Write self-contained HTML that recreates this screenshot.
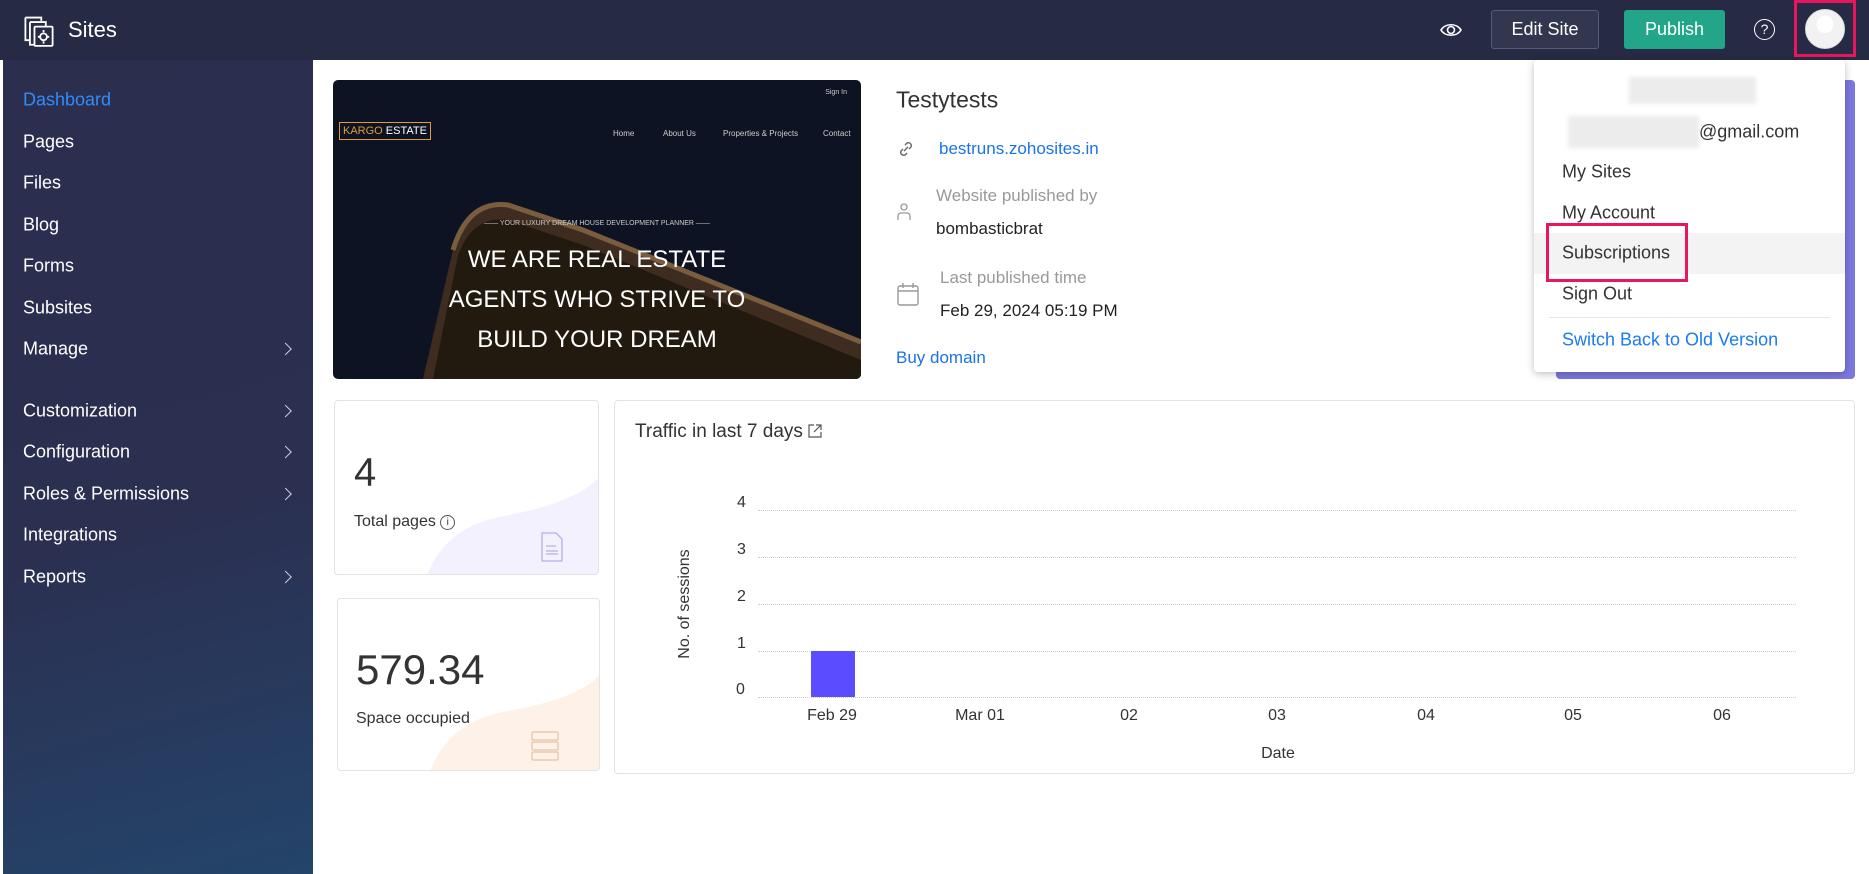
<!DOCTYPE html>
<html><head><meta charset="utf-8"><style>
*{margin:0;padding:0;box-sizing:border-box}
body{width:1869px;height:874px;overflow:hidden;background:#fff;font-family:"Liberation Sans",sans-serif;position:relative;color:#222}
.a{position:absolute;white-space:nowrap}
#hdr{left:0;top:0;width:1869px;height:60px;background:#272a45}
#side{left:3px;top:60px;width:310px;height:814px;background:linear-gradient(165deg,#2b2e4d 0%,#2b2f50 55%,#24446a 100%)}
.nav{position:absolute;left:20px;color:#fff;font-size:18px;transform:translateY(-50%)}
.chev{position:absolute;left:278px;width:9px;height:9px;border-right:1.6px solid #ccd;border-top:1.6px solid #ccd;transform:translateY(-50%) rotate(45deg)}
.mid{transform:translateY(-50%)}
.dd{font-size:18px;color:#333;left:1562px}
.yl{font-size:16px;color:#333;left:737px}
.xl{font-size:16px;color:#333;top:716px;transform:translate(-50%,-50%)}
.grid{position:absolute;left:758px;width:1038px;border-top:1.5px dotted #ccc}
.pn{position:absolute;top:49px;color:#ccc;font-size:8px}
</style></head><body>
<div id="hdr" class="a"></div>
<svg class="a" style="left:22px;top:13px" width="34" height="34" viewBox="0 0 28 30" fill="none" stroke="#fff" stroke-width="1.6"><path d="M2 4h14v3M2 4v20h4M6 8h14v4M6 8v20h4"/><rect x="10" y="12" width="16" height="17" rx="1"/><circle cx="18" cy="21" r="3"/><path d="M18 15v2M18 25v2M13 21h2M21 21h2"/></svg>
<div class="a mid" style="left:68px;top:30px;color:#fff;font-size:22px">Sites</div>
<svg class="a" style="left:1440px;top:20px" width="22" height="20" viewBox="0 0 22 20" fill="none" stroke="#fff" stroke-width="1.6"><path d="M1 10C5 3 17 3 21 10C17 17 5 17 1 10Z"/><circle cx="11" cy="10" r="3.5"/></svg>
<div class="a" style="left:1491px;top:10px;width:108px;height:39px;background:#33364f;border:1px solid #565a72;border-radius:3px;color:#fff;font-size:18px;text-align:center;line-height:37px">Edit Site</div>
<div class="a" style="left:1624px;top:10px;width:101px;height:39px;background:#23a58a;border-radius:3px;color:#fff;font-size:18px;text-align:center;line-height:39px">Publish</div>
<div class="a" style="left:1754px;top:19px;width:21px;height:21px;border:1.6px solid #fff;border-radius:50%;color:#fff;font-size:14px;text-align:center;line-height:18px">?</div>
<div class="a" style="left:1794px;top:0;width:62px;height:57px;border:3px solid #e8175d"></div>
<div class="a" style="left:1805px;top:9px;width:40px;height:40px;border-radius:50%;background:radial-gradient(circle at 50% 38%,#fff 0 28%,#f2f2f2 29% 100%);border:1px solid #ddd"></div>

<div id="side" class="a">
<div class="nav" style="top:40px;color:#2f8cff">Dashboard</div>
<div class="nav" style="top:82px">Pages</div>
<div class="nav" style="top:123px">Files</div>
<div class="nav" style="top:165px">Blog</div>
<div class="nav" style="top:206px">Forms</div>
<div class="nav" style="top:248px">Subsites</div>
<div class="nav" style="top:289px">Manage</div><div class="chev" style="top:289px"></div>
<div class="nav" style="top:351px">Customization</div><div class="chev" style="top:351px"></div>
<div class="nav" style="top:392px">Configuration</div><div class="chev" style="top:392px"></div>
<div class="nav" style="top:434px">Roles &amp; Permissions</div><div class="chev" style="top:434px"></div>
<div class="nav" style="top:475px">Integrations</div>
<div class="nav" style="top:517px">Reports</div><div class="chev" style="top:517px"></div>
</div>

<!-- preview -->
<div class="a" style="left:333px;top:80px;width:528px;height:299px;background:#0d1322;border-radius:5px;overflow:hidden">
<svg width="528" height="299" style="position:absolute;left:0;top:0"><path d="M90 299L120 170Q135 120 175 125L250 150L528 260L528 299Z" fill="#3e2c20"/><path d="M100 299L125 175Q140 135 175 140L250 165L528 280L528 299Z" fill="#22190f"/><path d="M120 170Q135 120 175 125L250 150L528 262" stroke="#7a5c3e" stroke-width="5" fill="none"/></svg>
<div class="a" style="right:14px;top:9px;color:#ccc;font-size:7px">Sign In</div>
<div class="a" style="left:6px;top:42px;border:1.5px solid #e29a3a;padding:2px 3px;font-size:11px;color:#e29a3a">KARGO <span style="color:#fff">ESTATE</span></div>
<div class="pn" style="left:280px">Home</div>
<div class="pn" style="left:330px">About Us</div>
<div class="pn" style="left:390px">Properties &amp; Projects</div>
<div class="pn" style="left:490px">Contact</div>
<div class="a" style="left:0;width:528px;top:140px;text-align:center;color:#ccc;font-size:7px">—— YOUR LUXURY DREAM HOUSE DEVELOPMENT PLANNER ——</div>
<div class="a" style="left:0;width:528px;top:160px;text-align:center;color:#fff;font-size:24px;line-height:40px">WE ARE REAL ESTATE<br>AGENTS WHO STRIVE TO<br>BUILD YOUR DREAM</div>
</div>

<div class="a mid" style="left:896px;top:100px;font-size:23px;color:#333">Testytests</div>
<svg class="a" style="left:896px;top:139px" width="20" height="20" viewBox="0 0 20 20" fill="none" stroke="#666" stroke-width="1.4"><path d="M8 12l4-4M9 6l2-2a3 3 0 014 4l-2 2M11 14l-2 2a3 3 0 01-4-4l2-2"/></svg>
<div class="a mid" style="left:939px;top:149px;font-size:17px;color:#1a73e8">bestruns.zohosites.in</div>
<svg class="a" style="left:896px;top:201px" width="16" height="20" viewBox="0 0 16 20" fill="none" stroke="#999" stroke-width="1.3"><circle cx="8" cy="6" r="3"/><path d="M2 19v-4a3 3 0 013-3h6a3 3 0 013 3v4"/></svg>
<div class="a mid" style="left:936px;top:196px;font-size:17px;color:#999">Website published by</div>
<div class="a mid" style="left:936px;top:229px;font-size:17px;color:#222">bombasticbrat</div>
<svg class="a" style="left:897px;top:282px" width="22" height="24" viewBox="0 0 22 24" fill="none" stroke="#999" stroke-width="1.4"><rect x="1" y="4" width="20" height="19" rx="2"/><path d="M1 9h20M6 1v5M16 1v5"/></svg>
<div class="a mid" style="left:940px;top:278px;font-size:17px;color:#999">Last published time</div>
<div class="a mid" style="left:940px;top:311px;font-size:17px;color:#222">Feb 29, 2024 05:19 PM</div>
<div class="a mid" style="left:896px;top:358px;font-size:17px;color:#1a73e8">Buy domain</div>

<div class="a" style="left:1556px;top:80px;width:299px;height:299px;background:#7b78e0;border-radius:4px"></div>
<div class="a" style="left:1534px;top:60px;width:311px;height:312px;background:#fff;border-radius:4px;box-shadow:0 2px 8px rgba(0,0,0,.25)"></div>
<div class="a" style="left:1629px;top:77px;width:127px;height:27px;background:#ececec;filter:blur(2px)"></div>
<div class="a" style="left:1568px;top:116px;width:131px;height:32px;background:#ececec;filter:blur(2px)"></div>
<div class="a mid dd" style="left:1699px;top:132px">@gmail.com</div>
<div class="a mid dd" style="top:172px">My Sites</div>
<div class="a mid dd" style="top:213px">My Account</div>
<div class="a" style="left:1534px;top:233px;width:311px;height:41px;background:#f3f3f3"></div>
<div class="a mid dd" style="top:253px">Subscriptions</div>
<div class="a" style="left:1546px;top:223px;width:142px;height:59px;border:3px solid #e8175d"></div>
<div class="a mid dd" style="top:294px">Sign Out</div>
<div class="a" style="left:1549px;top:317px;width:281px;border-top:1px solid #e5e5e5"></div>
<div class="a mid dd" style="top:340px;color:#1a7cf0">Switch Back to Old Version</div>

<div class="a" style="left:334px;top:400px;width:265px;height:175px;border:1px solid #e3e3e3;border-radius:4px;overflow:hidden">
<svg width="265" height="175" style="position:absolute;left:0;top:0"><path d="M92 175Q110 125 170 115Q245 100 265 75L265 175Z" fill="#f3f1fd"/></svg>
<div class="a mid" style="left:19px;top:72px;font-size:40px;color:#333">4</div>
<div class="a mid" style="left:19px;top:121px;font-size:16px;color:#333">Total pages <span style="display:inline-block;width:15px;height:15px;border:1px solid #555;border-radius:50%;font-size:10px;text-align:center;line-height:13px;vertical-align:1px">i</span></div>
<svg class="a" style="left:206px;top:131px" width="22" height="30" viewBox="0 0 22 30" fill="none" stroke="#b7aee8" stroke-width="1.3"><path d="M1 1h14l6 6v22H1Z"/><path d="M5 14h10M5 19h12M5 22h12"/></svg>
</div>
<div class="a" style="left:337px;top:598px;width:263px;height:173px;border:1px solid #e3e3e3;border-radius:4px;overflow:hidden">
<svg width="263" height="173" style="position:absolute;left:0;top:0"><path d="M92 173Q110 122 170 112Q240 100 263 75L263 173Z" fill="#fdf1e8"/></svg>
<div class="a mid" style="left:18px;top:71px;font-size:42px;color:#333">579.34</div>
<div class="a mid" style="left:18px;top:120px;font-size:16px;color:#333">Space occupied</div>
<svg class="a" style="left:193px;top:132px" width="28" height="30" viewBox="0 0 28 30" fill="none" stroke="#e4c4a4" stroke-width="1.2"><rect x="1" y="1" width="26" height="8" rx="1"/><rect x="1" y="11" width="26" height="8" rx="1"/><rect x="1" y="21" width="26" height="8" rx="1"/></svg>
</div>

<div class="a" style="left:614px;top:400px;width:1241px;height:374px;border:1px solid #e3e3e3;border-radius:4px"></div>
<div class="a mid" style="left:635px;top:432px;font-size:19px;color:#333">Traffic in last 7 days <svg width="14" height="14" viewBox="0 0 14 14" fill="none" stroke="#555" stroke-width="1.2" style="vertical-align:-1px"><path d="M6 1H1v12h12V8M8 1h5v5M13 1L6 8"/></svg></div>
<div class="grid" style="top:510px"></div><div class="grid" style="top:557px"></div><div class="grid" style="top:604px"></div><div class="grid" style="top:651px"></div><div class="grid" style="top:697px"></div>
<div class="a mid yl" style="top:503px">4</div>
<div class="a mid yl" style="top:550px">3</div>
<div class="a mid yl" style="top:597px">2</div>
<div class="a mid yl" style="top:644px">1</div>
<div class="a mid yl" style="top:690px;left:736px">0</div>
<div class="a" style="left:811px;top:651px;width:44px;height:46px;background:#5b4cff"></div>
<div class="a" style="left:685px;top:604px;font-size:16px;color:#333;transform:translate(-50%,-50%) rotate(-90deg)">No. of sessions</div>
<div class="a xl" style="left:832px">Feb 29</div>
<div class="a xl" style="left:980px">Mar 01</div>
<div class="a xl" style="left:1129px">02</div>
<div class="a xl" style="left:1277px">03</div>
<div class="a xl" style="left:1426px">04</div>
<div class="a xl" style="left:1573px">05</div>
<div class="a xl" style="left:1722px">06</div>
<div class="a xl" style="left:1278px;top:754px">Date</div>
</body></html>
